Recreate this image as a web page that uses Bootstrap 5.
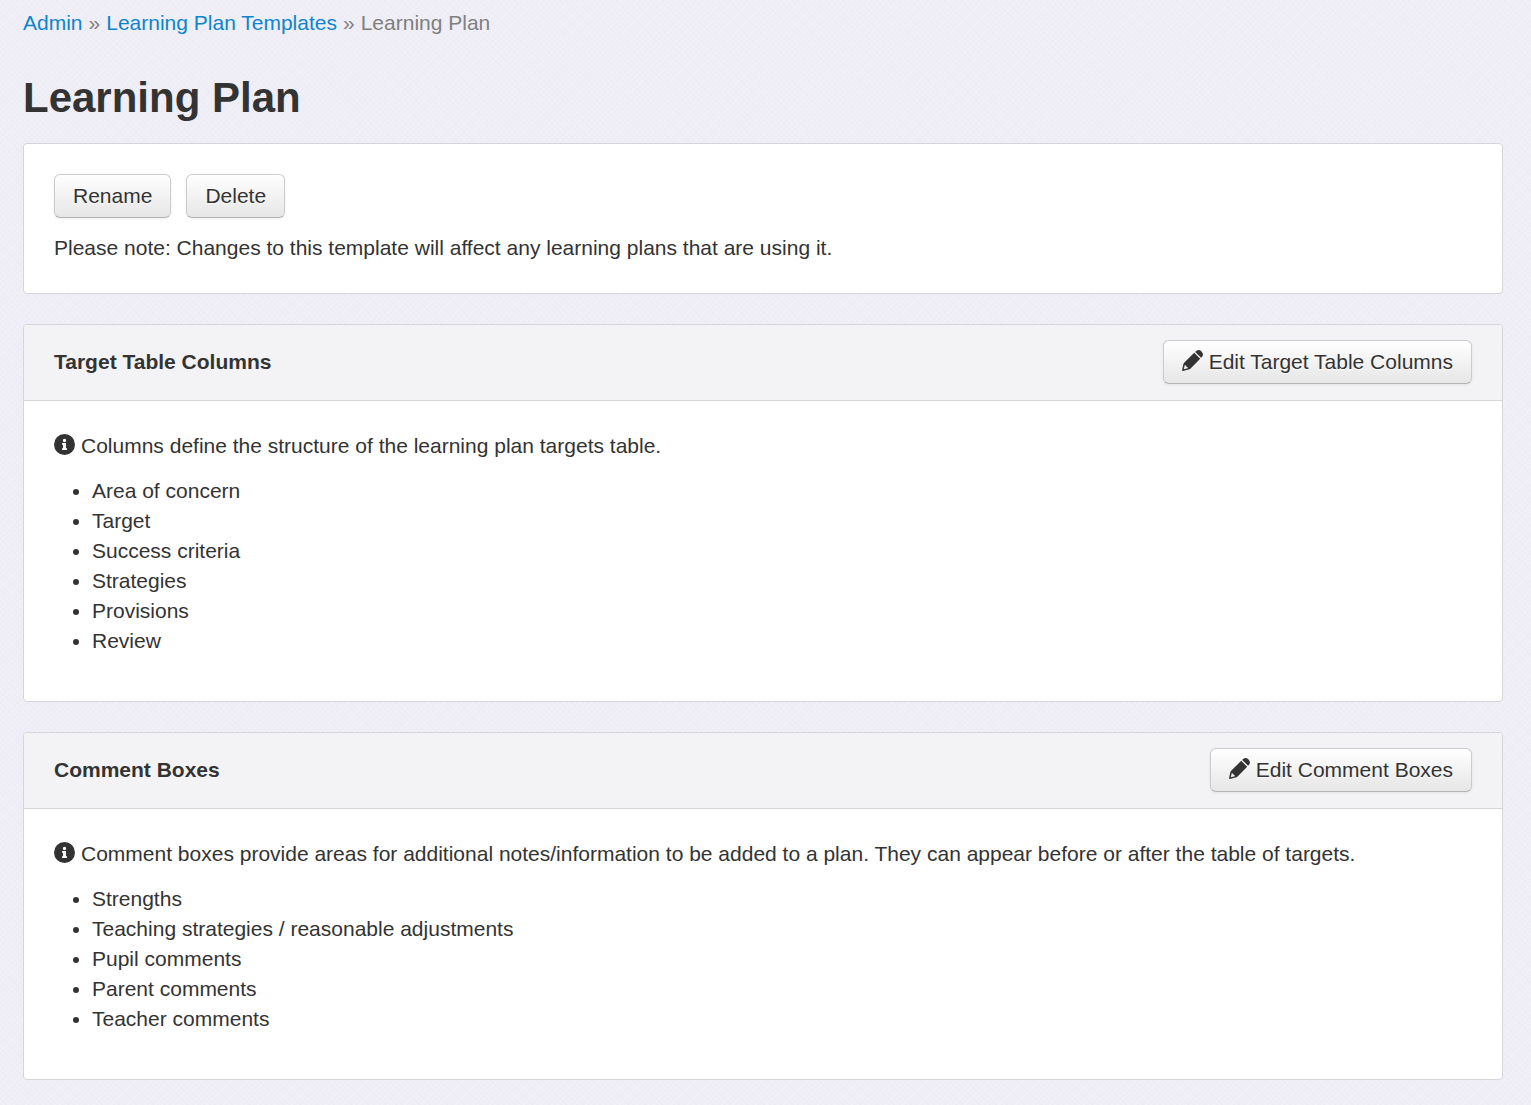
<!DOCTYPE html>
<html lang="en">
<head>
<meta charset="utf-8">
<meta name="viewport" content="width=device-width, initial-scale=1">
<title>Learning Plan</title>
<link href="https://cdn.jsdelivr.net/npm/bootstrap@5.3.0/dist/css/bootstrap.min.css" rel="stylesheet">
<style>
  body {
    font-family: "Liberation Sans", Arial, sans-serif;
    font-size: 21px;
    line-height: 30px;
    color: #333;
    background-color: #efeef7;
    background-image:
      repeating-linear-gradient(45deg, rgba(150, 150, 150, .03) 0 1px, transparent 1px 4px),
      repeating-linear-gradient(-45deg, rgba(255, 255, 255, .15) 0 1px, transparent 1px 4px);
  }
  .page { padding: 8px 28px 25px 23px; }
  .breadcrumb { --bs-breadcrumb-divider: "»"; --bs-breadcrumb-item-padding-x: 6px; --bs-breadcrumb-margin-bottom: 30px; --bs-breadcrumb-divider-color: #808080; --bs-breadcrumb-item-active-color: #808080; --bs-breadcrumb-font-size: 21px; }
  .breadcrumb a { color: #0d85cc; text-decoration: none; }
  h1 { font-size: 42px; line-height: 60px; font-weight: 700; margin-bottom: 15px; }
  .card { --bs-card-border-color: #d6d6da; --bs-card-border-radius: 4px; --bs-card-inner-border-radius: 3px; --bs-card-spacer-x: 30px; --bs-card-spacer-y: 30px; --bs-card-cap-padding-x: 30px; --bs-card-cap-bg: #f3f3f5; color: #333; }
  .card-header { padding-top: 15px; padding-bottom: 16px; }
  .card + .card { margin-top: 30px; }
  h2 { font-size: 21px; line-height: 30px; font-weight: 700; }
  .btn-soft {
    --bs-btn-padding-x: 18px; --bs-btn-padding-y: 6px; --bs-btn-font-size: 21px; --bs-btn-line-height: 30px;
    --bs-btn-color: #333; --bs-btn-hover-color: #333; --bs-btn-border-radius: 6px;
    --bs-btn-border-color: #ccc; --bs-btn-hover-border-color: #bbb;
    background: linear-gradient(#fff, #e6e6e6);
    border-bottom-color: #b3b3b3;
    text-shadow: 0 1px 1px rgba(255, 255, 255, .75);
    box-shadow: 0 1px 3px rgba(0, 0, 0, .07);
  }
  .btn-row { gap: 15px; margin-bottom: 15px; }
  .glyph { width: 21px; height: 21px; flex: none; fill: currentColor; margin-bottom: 3px; }
  .glyph-gap { gap: 6px; }
  .plan-list { padding-left: 38px; margin: 15px 0; }
</style>
<script src="https://cdn.jsdelivr.net/npm/bootstrap@5.3.0/dist/js/bootstrap.bundle.min.js" defer></script>
</head>
<body>
<svg class="d-none" aria-hidden="true">
  <symbol id="pencil" viewBox="0 0 21 21">
    <path d="M12.2 2.8 18.2 8.8 8.6 18.4Q7.7 19.3 6.4 19.6L1 20.9Q0 21 .1 20L1.2 14.8Q1.5 13.5 2.4 12.6ZM2.7 15.2 1.8 19.2 5.8 18.3Q6 16.9 4.6 16.8 4.3 15 2.7 15.2Z" fill-rule="evenodd"/>
    <path d="M13.2 1.9 14.4.8Q17-1 19.5 1.5 22 4 20.2 6.6L19.1 7.8Z"/>
  </symbol>
  <symbol id="info" viewBox="0 0 21 21">
    <path fill-rule="evenodd" d="M10.5 0a10.5 10.5 0 1 1 0 21 10.5 10.5 0 0 1 0-21ZM10.5 4.8a1.7 1.7 0 1 0 0 3.4 1.7 1.7 0 0 0 0-3.4ZM8 9v1.8h1v3.4H8V16h5v-1.8h-1V9Z"/>
  </symbol>
</svg>
<main class="page">
  <nav aria-label="Breadcrumb">
    <ol class="breadcrumb">
      <li class="breadcrumb-item"><a href="#">Admin</a></li>
      <li class="breadcrumb-item"><a href="#">Learning Plan Templates</a></li>
      <li class="breadcrumb-item active" aria-current="page">Learning Plan</li>
    </ol>
  </nav>
  <h1>Learning Plan</h1>

  <section class="card">
    <div class="card-body">
      <div class="d-flex btn-row">
        <button type="button" class="btn btn-soft">Rename</button>
        <button type="button" class="btn btn-soft">Delete</button>
      </div>
      <p class="mb-0">Please note: Changes to this template will affect any learning plans that are using it.</p>
    </div>
  </section>

  <section class="card">
    <div class="card-header d-flex justify-content-between align-items-center">
      <h2 class="mb-0">Target Table Columns</h2>
      <button type="button" class="btn btn-soft d-flex align-items-center glyph-gap"><svg class="glyph" aria-hidden="true"><use href="#pencil"/></svg>Edit Target Table Columns</button>
    </div>
    <div class="card-body">
      <p class="d-flex align-items-center glyph-gap mb-0"><svg class="glyph" aria-hidden="true"><use href="#info"/></svg>Columns define the structure of the learning plan targets table.</p>
      <ul class="plan-list">
        <li>Area of concern</li>
        <li>Target</li>
        <li>Success criteria</li>
        <li>Strategies</li>
        <li>Provisions</li>
        <li>Review</li>
      </ul>
    </div>
  </section>

  <section class="card">
    <div class="card-header d-flex justify-content-between align-items-center">
      <h2 class="mb-0">Comment Boxes</h2>
      <button type="button" class="btn btn-soft d-flex align-items-center glyph-gap"><svg class="glyph" aria-hidden="true"><use href="#pencil"/></svg>Edit Comment Boxes</button>
    </div>
    <div class="card-body">
      <p class="d-flex align-items-center glyph-gap mb-0"><svg class="glyph" aria-hidden="true"><use href="#info"/></svg>Comment boxes provide areas for additional notes/information to be added to a plan. They can appear before or after the table of targets.</p>
      <ul class="plan-list">
        <li>Strengths</li>
        <li>Teaching strategies / reasonable adjustments</li>
        <li>Pupil comments</li>
        <li>Parent comments</li>
        <li>Teacher comments</li>
      </ul>
    </div>
  </section>
</main>
</body>
</html>
